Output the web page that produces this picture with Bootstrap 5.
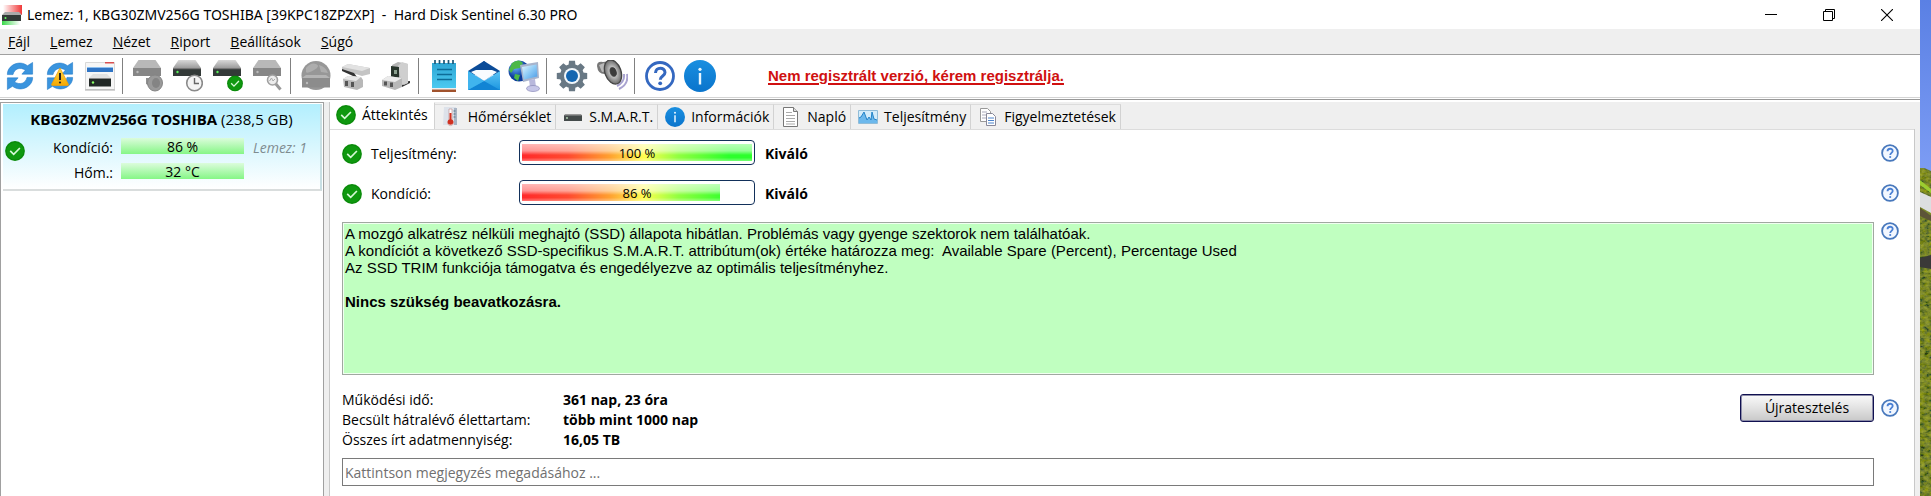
<!DOCTYPE html>
<html lang="hu">
<head>
<meta charset="utf-8">
<meta name="viewport" content="width=device-width, initial-scale=1">
<title>Hard Disk Sentinel 6.30 PRO</title>
<link href="https://cdn.jsdelivr.net/npm/bootstrap@5.3.0/dist/css/bootstrap.min.css" rel="stylesheet">
<style>
  body { font-family: "Open Sans", "Noto Sans", sans-serif; font-size: 14px; line-height: 20px; color: #000; background: #fff; }
  button { color: inherit; }
  svg { display: block; }
  .hairless { border: 0; background: none; padding: 0; }

  .titlebar { height: 29px; padding-left: 2px; }
  .titlebar .caption-text { white-space: pre; font-family: "Noto Sans", sans-serif; padding-left: 5px; }
  .winbtn { width: 58px; height: 29px; }

  .menubar { height: 26px; background: #efefef; border-bottom: 1px solid #a0a0a0; padding-left: 8px; gap: 20px; }
  .menubar a { color: #000; text-decoration: none; }

  .toolbar { height: 42px; }
  .tool { width: 40px; height: 42px; }
  .tool-sep { width: 8px; height: 36px; }
  .tool-sep::before { content: ""; display: block; width: 1px; height: 36px; margin-left: 2px; background: #808080; }
  .register { margin-left: 48px; font: bold 15px/20px "Liberation Sans", Arial, sans-serif; color: #d01010; text-underline-offset: 2px; text-decoration-thickness: 2px; }
  .register:hover { color: #a00; }

  .body-area { border-top: 1px solid #d4d4d4; background: #efefef; padding: 4px 5px 0 0; box-shadow: inset 0 1px #fff, inset 0 2px #989898, inset 0 4px #fff; }
  .side { width: 324px; background: #fff; border: 1px solid #a0a0a0; border-bottom: 0; padding: 1px 1px 0 2px; }
  .main { margin-left: 5px; border-left: 1px solid #c8c8c8; min-width: 0; }

  .disk { height: 87px; background: linear-gradient(#b2effe, #e0f8fe 60%, #fff); border-right: 2px solid #c8dfe4; border-bottom: 2px solid #d9dddd; padding-top: 5px; text-align: left; }
  .disk .disk-title { font-size: 15px; }
  .disk-grid { display: grid; grid-template-columns: 30px 80px 131px auto; column-gap: 0; row-gap: 5px; margin-top: 9px; line-height: 20px; }
  .disk-grid .check { grid-row: span 2; padding: 3px 0 0 2px; }
  .disk-grid .name { text-align: right; }
  .meter { height: 16px; line-height: 18px; margin: 0 0 0 8px; align-self: start; background: linear-gradient(#dcfcdc, #86f686); text-align: center; }
  .disk-grid .ord { padding-left: 9px; color: #7f8c90; font-style: italic; }

  .tabs { padding-top: 2px; }
  .tabs .tab { height: 25px; padding: 0 4px 0 7px; gap: 6px; border: 0; border-right: 1px solid #d2d2d2; border-top: 1px solid #dcdcdc; background: #f0f0f0; }
  .tabs .tab.active { height: 27px; margin-top: -2px; padding: 0 6px 2px 6px; background: #fff; border-top-color: #fff; }
  .tabs .tab svg { width: 20px; height: 20px; }
  .pane { background: #fff; border-right: 1px solid #c8c8c8; padding: 11px 15px 10px 12px; box-shadow: inset 0 1px #dcdcdc; }

  .stat { height: 40px; }
  .stat .stat-name { width: 157px; padding-left: 9px; }
  .gauge { width: 236px; height: 25px; border: 1px solid #12305a; border-radius: 4px; padding: 3px 2px; background: #fff; position: relative; }
  .gauge .fill { height: 17px; width: calc(var(--v) * 1%);
    background-image: linear-gradient(rgba(255,255,255,.66), rgba(255,255,255,.5) 40%, rgba(255,255,255,0) 65%, rgba(255,255,255,0) 80%, rgba(255,255,255,.35)),
      linear-gradient(90deg, #ff2a2a, #ff4a30 20%, #ffa030 38%, #ffff50 53%, #90ff40 68%, #2cff2c 90%);
    background-size: calc(10000% / var(--v)) 100%; }
  .gauge .value { position: absolute; inset: 0; text-align: center; font-size: 13px; line-height: 24px; }
  .help { width: 18px; height: 18px; flex: none; }
  .verdict { margin-left: 10px; font-weight: 700; }

  .report-row { margin-top: 2px; }
  .report { height: 153px; border: 1px solid #a0a8a0; background: #c0ffc0; box-shadow: inset 0 0 0 1px #f0fff0; padding: 2px; font: 15px/17px "Liberation Sans", Arial, sans-serif; }
  .report p { margin: 0; white-space: pre-wrap; }
  .gap-help { gap: 7px; }

  .facts-row { margin-top: 15px; }
  .facts { display: grid; grid-template-columns: 221px auto; margin: 0; }
  .facts dt { font-weight: 400; }
  .facts dd { font-weight: 700; margin: 0; }
  .retest { width: 134px; height: 28px; border: 1px solid #101050; border-radius: 3px; background: linear-gradient(#fafafa, #e2e2e2 50%, #c8c8c8); box-shadow: inset 0 0 0 1px #8c8ca8; padding: 0; }
  .note { height: 28px; border: 1px solid #7a7a7a; border-radius: 0; padding: 0 2px; font-size: 14px; color: #000; margin-right: 25px; }
  .note::placeholder { color: #707070; opacity: 1; }
  .wallpaper { width: 11px; flex: none; }
</style>
</head>
<body>
<svg width="0" height="0" class="position-absolute" aria-hidden="true">
  <defs>
    <linearGradient id="gSteel" x2="0" y2="1"><stop stop-color="#d8d8d8"/><stop offset="1" stop-color="#9c9c9c"/></linearGradient>
    <linearGradient id="gWarn" x2="0" y2="1"><stop stop-color="#ffd84a"/><stop offset="1" stop-color="#f5a800"/></linearGradient>
    <linearGradient id="gInfo" x2="0" y2="1"><stop stop-color="#1a8fe0"/><stop offset="1" stop-color="#0a74cc"/></linearGradient>
    <linearGradient id="gScreen" x2="1" y2="1"><stop stop-color="#e4f6ff"/><stop offset=".5" stop-color="#8ecbf6"/><stop offset="1" stop-color="#4a9ae6"/></linearGradient>
    <linearGradient id="gMail" x2="0" y2="1"><stop stop-color="#5cc4f4"/><stop offset="1" stop-color="#1c96e0"/></linearGradient>
    <linearGradient id="gNote" x2="0" y2="1"><stop stop-color="#2ea6d4"/><stop offset="1" stop-color="#4ccaf0"/></linearGradient>
    <linearGradient id="gSky" x2="0" y2="1"><stop stop-color="#5a80e4"/><stop offset="1" stop-color="#7c9cf4"/></linearGradient>
    <radialGradient id="gGlobe" cx=".35" cy=".3"><stop stop-color="#6cb8ff"/><stop offset="1" stop-color="#0c3c9c"/></radialGradient>
    <radialGradient id="gCone"><stop stop-color="#404040"/><stop offset=".35" stop-color="#555"/><stop offset=".45" stop-color="#bbb"/><stop offset="1" stop-color="#6c6c6c"/></radialGradient>
    <symbol id="ok" viewBox="0 0 20 20"><circle cx="10" cy="10" r="9.9" fill="#0a8a0a"/><circle cx="10" cy="10" r="8.6" fill="#0f980f"/><path d="M5.2 9.8l3.500 3.500 6.200-6.300" fill="none" stroke="#d6f8d6" stroke-width="1.700"/></symbol>
    <symbol id="helpc" viewBox="0 0 18 18"><circle cx="9" cy="9" r="7.900" fill="#f2f7ff" stroke="#4878bc" stroke-width="1.800"/><path d="M6.500 7.300c0-3.400 5.200-3.300 5.200-.3 0 1.800-2.500 2-2.500 4" fill="none" stroke="#4a80d4" stroke-width="1.800"/><circle cx="9.200" cy="13" r="1.100" fill="#4a80d4"/></symbol>
    <symbol id="info" viewBox="0 0 32 32"><circle cx="16" cy="16" r="16" fill="url(#gInfo)"/><circle cx="16" cy="9.300" r="1.600" fill="#e8f6ff"/><path d="M16 13v11.500" stroke="#e8f6ff" stroke-width="2.400"/></symbol>
    <symbol id="sync" viewBox="0 0 30 30"><path d="M1.500 13.500C1 4 14-3 23 4l5.500-3.500v12.500H17l3.800-4.300C15 5 9 7 7.500 13.500z" fill="#3a94de" stroke="#1f78c8" stroke-width=".6"/><path d="M28.500 16.500C29 26 16 33 7 26L1.500 29.500V17H13l-3.800 4.300C15 25 21 23 22.500 16.500z" fill="#3a94de" stroke="#1f78c8" stroke-width=".6"/></symbol>
    <symbol id="drive" viewBox="0 0 28 18"><path d="M5.500 0h17L28 8H0z" fill="url(#gSteel)"/><path d="M0 8h28v8H0z" fill="#333a38"/><path d="M0 8h28v1.200H0z" fill="#777"/><circle cx="4.500" cy="12" r="1.200" fill="#5af05a"/></symbol>
    <symbol id="driveoff" viewBox="0 0 28 18"><path d="M5.500 0h17L28 8H0z" fill="#b8b8b8"/><path d="M0 8h28v8H0z" fill="#868686"/><circle cx="4.500" cy="12" r="1.200" fill="#bbb"/></symbol>
  </defs>
</svg>

<div class="d-flex min-vh-100">
  <div class="d-flex flex-column flex-grow-1" style="min-width:0">
    <header class="titlebar d-flex align-items-center">
      <svg width="20" height="20" viewBox="0 0 20 20"><defs><linearGradient id="gRed"><stop stop-color="#fff"/><stop offset="1" stop-color="#f03838"/></linearGradient><linearGradient id="gGreen"><stop stop-color="#38d848"/><stop offset="1" stop-color="#fff"/></linearGradient></defs><path d="M1 0h19v10H1z" fill="url(#gRed)"/><path d="M0 10h18v10H0z" fill="url(#gGreen)"/><path d="M3 7h14l3 3H0z" fill="#aaa"/><path d="M0 10h19v6H0z" fill="#333b38"/><circle cx="3.500" cy="13" r="1" fill="#6f6"/></svg>
      <span class="caption-text flex-grow-1">Lemez: 1, KBG30ZMV256G TOSHIBA [39KPC18ZPZXP]  -  Hard Disk Sentinel 6.30 PRO</span>
      <button class="hairless winbtn d-flex align-items-center justify-content-center" aria-label="Kis méret"><svg width="12" height="12"><path d="M0 5.500h12" stroke="#000"/></svg></button>
      <button class="hairless winbtn d-flex align-items-center justify-content-center" aria-label="Előző méret"><svg width="12" height="12"><path d="M.5 2.500h9v9h-9zM2.500 2.500v-2h9v9h-2" fill="none" stroke="#000"/></svg></button>
      <button class="hairless winbtn d-flex align-items-center justify-content-center me-1" aria-label="Bezárás"><svg width="12" height="12"><path d="M0 0l12 12M12 0L0 12" stroke="#000" stroke-width="1.100"/></svg></button>
    </header>

    <nav class="menubar d-flex align-items-center">
      <a href="#"><u>F</u>ájl</a><a href="#"><u>L</u>emez</a><a href="#"><u>N</u>ézet</a><a href="#"><u>R</u>iport</a><a href="#"><u>B</u>eállítások</a><a href="#"><u>S</u>úgó</a>
    </nav>

    <div class="toolbar d-flex align-items-center">
      <button class="hairless tool d-flex align-items-center justify-content-center" aria-label="Frissítés"><svg width="28" height="28"><use href="#sync"/></svg></button>
      <button class="hairless tool d-flex align-items-center justify-content-center" aria-label="Teljes frissítés"><svg width="28" height="28" viewBox="0 0 28 28"><use href="#sync"/><path d="M14 6l8.500 16.500q0 1-1 1h-15q-1 0-1-1z" fill="url(#gWarn)" stroke="#e8a010" stroke-width=".8"/><path d="M14 11v7" stroke="#222" stroke-width="2"/><circle cx="14" cy="20.500" r="1.100" fill="#222"/></svg></button>
      <button class="hairless tool d-flex align-items-center justify-content-center" aria-label="Lemezpanel"><svg width="30" height="30" viewBox="0 0 30 30"><path d="M.5 1.500h29v27H.5z" fill="#f6f6f6" stroke="#d8d8d8"/><path d="M0 29h30" stroke="#aaa"/><path d="M20 1h9v1.500h-9z" fill="#d85050"/><path d="M2 7h26v4H2z" fill="#2f74c4"/><path d="M2 6h26v1H2z" fill="#8cc0f0"/><path d="M8 13h14l4 4H4z" fill="#e2e2e2"/><path d="M4 17.500h22v8H4z" fill="#222826"/><path d="M4 17h22v1H4z" fill="#888"/><circle cx="8" cy="21.500" r="1.200" fill="#8f6"/></svg></button>
      <span class="tool-sep"></span>
      <button class="hairless tool d-flex align-items-center justify-content-center" aria-label="Akusztika" disabled><svg width="30" height="32" viewBox="0 0 30 32"><use href="#driveoff" width="28" height="18"/><path d="M13 18h6v9l-6-3z" fill="#909090"/><ellipse cx="22" cy="23" rx="7.500" ry="8" fill="#9a9a9a" stroke="#858585"/><ellipse cx="23" cy="23" rx="4" ry="5" fill="#848484"/></svg></button>
      <button class="hairless tool d-flex align-items-center justify-content-center" aria-label="Rövid teszt"><svg width="30" height="32" viewBox="0 0 30 32"><use href="#drive" width="28" height="18"/><circle cx="21.500" cy="23" r="7.800" fill="#f4f4f4" stroke="#8a8a8a" stroke-width="1.600"/><path d="M21.500 18v5.500H26" fill="none" stroke="#666" stroke-width="1.400"/></svg></button>
      <button class="hairless tool d-flex align-items-center justify-content-center" aria-label="Teljes teszt"><svg width="30" height="32" viewBox="0 0 30 32"><use href="#drive" width="28" height="18"/><use href="#ok" x="14" y="15.500" width="16" height="16"/></svg></button>
      <button class="hairless tool d-flex align-items-center justify-content-center" aria-label="Felületvizsgálat" disabled><svg width="30" height="32" viewBox="0 0 30 32"><use href="#driveoff" width="28" height="18"/><path d="M22.500 23.500l5 6" stroke="#999" stroke-width="3"/><circle cx="19.500" cy="20" r="5" fill="#ececec" stroke="#a0a0a0" stroke-width="1.600"/><path d="M16.500 21l2-3 1.500 3 2-2" fill="none" stroke="#aaa"/></svg></button>
      <span class="tool-sep"></span>
      <button class="hairless tool d-flex align-items-center justify-content-center" aria-label="Hálózat" disabled><svg width="30" height="32" viewBox="0 0 30 32"><circle cx="15" cy="15.500" r="14.500" fill="#979797"/><path d="M5 8q5-6 10-4t-2 6-8 2zM18 5q7 2 9 8l-7-1z" fill="#adadad"/><path d="M5 15h20l4 3H1z" fill="#b4b4b4"/><path d="M1 18h28v9.500H1z" fill="#8c8c8c"/><circle cx="6" cy="23" r="1.200" fill="#bbb"/></svg></button>
      <button class="hairless tool d-flex align-items-center justify-content-center" aria-label="Lemez csatlakoztatása"><svg width="30" height="32" viewBox="0 0 30 32"><path d="M1 7l6-3 22 4v6l-8 2L1 10z" fill="#c4c4c4"/><path d="M1 7l6-3 22 4-8 3z" fill="#e2e2e2"/><path d="M1 9l12 4 3 4-4-1L1 11z" fill="#333"/><path d="M2 19l5-3 13 1 2 3v7l-6 3-13-3z" fill="#b8b8b8"/><path d="M2 19l5-3 13 1-5 4z" fill="#e8e8e8"/><path d="M4 21h3v5H4zM10 22h3v5h-3z" fill="#555"/></svg></button>
      <button class="hairless tool d-flex align-items-center justify-content-center" aria-label="Lemez leválasztása"><svg width="30" height="32" viewBox="0 0 30 32"><path d="M20 22l9-1v2l-8 4z" fill="#333"/><path d="M11 5l6-3 10 2v19l-4 2-12-6z" fill="#b4b4b4"/><path d="M17 6l4-4 6 2v19l-6 2z" fill="#cfcfcf"/><path d="M10 6l8 1v13l-8-2z" fill="#28352c"/><path d="M13 10h3v4h-3z" fill="#8ba08f"/><path d="M1 20l6-4 14 2v9l-7 3-13-4z" fill="#b8b8b8"/><path d="M1 20l6-4 14 2-7 4z" fill="#ebebeb"/><path d="M3 21.500h3v4H3zM9 22.500h3v4.500H9z" fill="#555"/></svg></button>
      <span class="tool-sep"></span>
      <button class="hairless tool d-flex align-items-center justify-content-center" aria-label="Jelentés"><svg width="26" height="32" viewBox="0 0 26 32"><path d="M1 3h24v25H1z" fill="url(#gNote)"/><path d="M1 28h24v1.500H1z" fill="#eee"/><path d="M1 29.500h24V32H1z" fill="#a0522d"/><path d="M4 0v4M8.500 0v4M13 0v4M17.500 0v4M22 0v4" stroke="#1d5878" stroke-width="1.700"/><path d="M6 9.500h15M6 14.500h15M6 19.500h15" stroke="#0d6c98" stroke-width="1.500"/></svg></button>
      <button class="hairless tool d-flex align-items-center justify-content-center" aria-label="E-mail"><svg width="32" height="32" viewBox="0 0 32 32"><path d="M0 11L16 1l16 10v4H0z" fill="#0c4c98"/><path d="M2 11l4-2h20l4 2-14 10z" fill="#0c4c98"/><path d="M3 12l5-2h16l5 2-13 9z" fill="#f8fcff"/><path d="M6 10l10-9 10 9z" fill="#0c4c98"/><path d="M0 11v19h32V11L16 21z" fill="url(#gMail)"/><path d="M0 30h32L16 21z" fill="#1184d4"/><path d="M0 11l16 10L0 30z" fill="#40b4ee"/></svg></button>
      <button class="hairless tool d-flex align-items-center justify-content-center" aria-label="Megosztás"><svg width="32" height="32" viewBox="0 0 32 32"><circle cx="11" cy="11" r="10.500" fill="url(#gGlobe)"/><path d="M4 3q7-5 11 0l-3 5-6 1-3 4-2-3zM7 14l5 1-2 6-4-3z" fill="#4cb848"/><path d="M12 5l18-3 1 16-16 4z" fill="#a8b4cc"/><path d="M14 7l14.500-2.500.8 12L16 19.500z" fill="url(#gScreen)"/><path d="M21 20l6-1 1 8h-6z" fill="#b8b8dc"/><ellipse cx="25" cy="28.500" rx="6.500" ry="3" fill="#c6c6e8" stroke="#8a8ab8" stroke-width=".7"/></svg></button>
      <span class="tool-sep"></span>
      <button class="hairless tool d-flex align-items-center justify-content-center" aria-label="Beállítások"><svg width="32" height="32" viewBox="0 0 32 32"><g fill="#687884"><circle cx="16" cy="16" r="12"/><path d="M12.500 6L13 .8h6L19.500 6zM12.500 26l.5 5.200h6l.5-5.200z"/><path d="M12.500 6L13 .8h6L19.500 6zM12.500 26l.5 5.200h6l.5-5.200z" transform="rotate(45 16 16)"/><path d="M12.500 6L13 .8h6L19.500 6zM12.500 26l.5 5.200h6l.5-5.200z" transform="rotate(90 16 16)"/><path d="M12.500 6L13 .8h6L19.500 6zM12.500 26l.5 5.200h6l.5-5.200z" transform="rotate(135 16 16)"/></g><circle cx="16" cy="16" r="8" fill="#f0f6fa"/><circle cx="16" cy="16" r="6" fill="#1466b0"/></svg></button>
      <button class="hairless tool d-flex align-items-center justify-content-center" aria-label="Hang"><svg width="32" height="32" viewBox="0 0 32 32"><path d="M31 14q2 10-8 15M28 14q1 8-7 12" fill="none" stroke="#a9a3d0" stroke-width="2"/><path d="M1 6q0-5 6-4l8-1 7 20-7 1-5-8q-8 1-9-8z" fill="#777"/><path d="M3 5l5-2 3 8-5 1z" fill="#b8b8b8"/><ellipse cx="17" cy="12" rx="8" ry="12.500" fill="url(#gCone)" stroke="#444" stroke-width="1.300" transform="rotate(-20 17 12)"/><ellipse cx="17.500" cy="12" rx="3" ry="4.500" fill="#3c3c3c" transform="rotate(-20 17 12)"/></svg></button>
      <span class="tool-sep"></span>
      <button class="hairless tool d-flex align-items-center justify-content-center" aria-label="Súgó"><svg width="30" height="30" viewBox="0 0 30 30"><circle cx="15" cy="15" r="13.500" fill="#fff" stroke="#3468c0" stroke-width="2.800"/><path d="M10.500 12c0-6.500 9.500-6.200 9.500-.5 0 3.500-4.700 3.500-4.700 7.200" fill="none" stroke="#3468c0" stroke-width="3"/><circle cx="15.200" cy="22.300" r="1.900" fill="#3468c0"/></svg></button>
      <button class="hairless tool d-flex align-items-center justify-content-center" aria-label="Névjegy"><svg width="32" height="32"><use href="#info"/></svg></button>
      <a href="#" class="register">Nem regisztrált verzió, kérem regisztrálja.</a>
    </div>

    <div class="body-area d-flex flex-grow-1">
      <aside class="side flex-shrink-0">
        <button class="hairless disk w-100 d-flex flex-column align-items-stretch justify-content-start">
          <span class="disk-title text-center"><b>KBG30ZMV256G TOSHIBA</b> (238,5 GB)</span>
          <span class="disk-grid">
            <span class="check d-flex align-items-start"><svg width="20" height="20"><use href="#ok"/></svg></span>
            <span class="name">Kondíció:</span><span class="meter">86 %</span><span class="ord">Lemez: 1</span>
            <span class="name">Hőm.:</span><span class="meter">32 °C</span>
          </span>
        </button>
      </aside>

      <main class="main d-flex flex-column flex-grow-1">
        <div class="tabs d-flex" role="tablist">
          <button class="tab active d-flex align-items-center" role="tab" aria-selected="true"><svg><use href="#ok"/></svg>Áttekintés</button>
          <button class="tab d-flex align-items-center" role="tab"><svg viewBox="0 0 20 20"><path d="M2 0h12v18H1z" fill="#dde2ea"/><path d="M12 1h3v17h-3z" fill="#a8b4c4"/><path d="M7 2h3v11a3 3 0 1 1-3 0z" fill="#fff" stroke="#b88" stroke-width=".6"/><path d="M8.500 6v9" stroke="#d03020" stroke-width="2"/><circle cx="8.500" cy="15" r="2.800" fill="#d03020"/><path d="M11.500 4h2M11.500 7h2M11.500 10h2" stroke="#578"/></svg>Hőmérséklet</button>
          <button class="tab d-flex align-items-center" role="tab"><svg viewBox="0 0 20 20"><path d="M1 8h18v6H1z" fill="#444a4a"/><path d="M2 7h16l1 1.500H1z" fill="#999"/><circle cx="4" cy="11" r=".9" fill="#bdb"/></svg>S.M.A.R.T.</button>
          <button class="tab d-flex align-items-center" role="tab"><svg><use href="#info"/></svg>Információk</button>
          <button class="tab d-flex align-items-center" role="tab"><svg viewBox="0 0 20 20"><path d="M2.500.5h10l4 4v15h-14z" fill="#fff" stroke="#777"/><path d="M12.500.5v4h4" fill="#ddd" stroke="#777"/><path d="M5 5.500h6M5 8.500h9M5 11.500h9M5 14.500h9M5 17h9" stroke="#aaa"/></svg>Napló</button>
          <button class="tab d-flex align-items-center" role="tab"><svg viewBox="0 0 20 20"><path d="M.5 3.500h19v13H.5z" fill="#d4ecfa" stroke="#90bcd8"/><path d="M1 16v-5l2-1 3-5 3 8 2-3 2 3 1-8 2 7 3 1v3z" fill="#6cb8ec"/><path d="M1 11l2-1 3-5 3 8 2-3 2 3 1-8 2 7 3 1" fill="none" stroke="#2484c8"/></svg>Teljesítmény</button>
          <button class="tab d-flex align-items-center" role="tab"><svg viewBox="0 0 20 20"><path d="M2.500 1.500h7l3 3v10h-10z" fill="#fff" stroke="#999"/><path d="M4 5h5M4 8h5M4 11h5" stroke="#aab"/><path d="M8.500 6.500h6l3 3v9h-9z" fill="#fff" stroke="#889"/><path d="M10 11h6M10 13.500h6M10 16h6" stroke="#4c84cc"/></svg>Figyelmeztetések</button>
        </div>

        <section class="pane flex-grow-1 d-flex flex-column">
          <div class="d-flex stat align-items-start">
            <svg width="20" height="20" class="mt-1"><use href="#ok"/></svg>
            <span class="stat-name mt-1" id="perf">Teljesítmény:</span>
            <div class="gauge" role="progressbar" aria-labelledby="perf" aria-valuenow="100" aria-valuemin="0" aria-valuemax="100"><div class="fill" style="--v:100"></div><span class="value">100 %</span></div>
            <span class="verdict mt-1">Kiváló</span>
            <button class="hairless help ms-auto mt-1" aria-label="Súgó"><svg width="18" height="18"><use href="#helpc"/></svg></button>
          </div>
          <div class="d-flex stat align-items-start">
            <svg width="20" height="20" class="mt-1"><use href="#ok"/></svg>
            <span class="stat-name mt-1" id="cond">Kondíció:</span>
            <div class="gauge" role="progressbar" aria-labelledby="cond" aria-valuenow="86" aria-valuemin="0" aria-valuemax="100"><div class="fill" style="--v:86"></div><span class="value">86 %</span></div>
            <span class="verdict mt-1">Kiváló</span>
            <button class="hairless help ms-auto mt-1" aria-label="Súgó"><svg width="18" height="18"><use href="#helpc"/></svg></button>
          </div>

          <div class="d-flex gap-help report-row">
            <div class="report flex-grow-1">
              <p>A mozgó alkatrész nélküli meghajtó (SSD) állapota hibátlan. Problémás vagy gyenge szektorok nem találhatóak.</p>
              <p>A kondíciót a következő SSD-specifikus S.M.A.R.T. attribútum(ok) értéke határozza meg:  Available Spare (Percent), Percentage Used</p>
              <p>Az SSD TRIM funkciója támogatva és engedélyezve az optimális teljesítményhez.</p>
              <br>
              <p><b>Nincs szükség beavatkozásra.</b></p>
            </div>
            <button class="hairless help" aria-label="Súgó"><svg width="18" height="18"><use href="#helpc"/></svg></button>
          </div>

          <div class="d-flex align-items-start facts-row">
            <dl class="facts flex-grow-1">
              <dt>Működési idő:</dt><dd>361 nap, 23 óra</dd>
              <dt>Becsült hátralévő élettartam:</dt><dd>több mint 1000 nap</dd>
              <dt>Összes írt adatmennyiség:</dt><dd>16,05 TB</dd>
            </dl>
            <div class="d-flex align-items-center gap-help mt-1">
              <button class="retest">Újratesztelés</button>
              <button class="hairless help" aria-label="Súgó"><svg width="18" height="18"><use href="#helpc"/></svg></button>
            </div>
          </div>

          <div class="d-flex mt-2"><input class="note flex-grow-1" type="text" aria-label="Megjegyzés" placeholder="Kattintson megjegyzés megadásához ..."></div>
        </section>
      </main>
    </div>
  </div>

  <svg class="wallpaper align-self-stretch h-auto" viewBox="0 0 11 496" preserveAspectRatio="none" aria-hidden="true">
    <defs>
      <filter id="grass" x="0" y="0" width="1" height="1"><feTurbulence type="fractalNoise" baseFrequency=".2 .3" numOctaves="3" seed="4"/><feColorMatrix values="1.400 0 0 0 -.35  1.300 0 0 0 -.25  0 0 .2 0 -.06  0 0 0 0 1"/></filter>
    </defs>
    <rect width="11" height="170" fill="url(#gSky)"/>
    <rect y="168" width="11" height="328" fill="#56661a"/>
    <rect y="168" width="11" height="328" filter="url(#grass)" opacity=".45"/>
    <path d="M0 166l11 5v-4H0z" fill="#7c9cf4"/>
    <path d="M0 180l11 9v4l-11-8z" fill="#9ccc30"/>
    <path d="M0 192l11 5v16l-11-6z" fill="#dcdee0"/>
    <path d="M0 258l11-3v14l-11-2z" fill="#3a3a38"/>
    <path d="M0 208l6 4 5 4v5l-7-3-4-2z" fill="#5c5438"/>
  </svg>
</div>
<script src="https://cdn.jsdelivr.net/npm/bootstrap@5.3.0/dist/js/bootstrap.bundle.min.js"></script>
</body>
</html>
